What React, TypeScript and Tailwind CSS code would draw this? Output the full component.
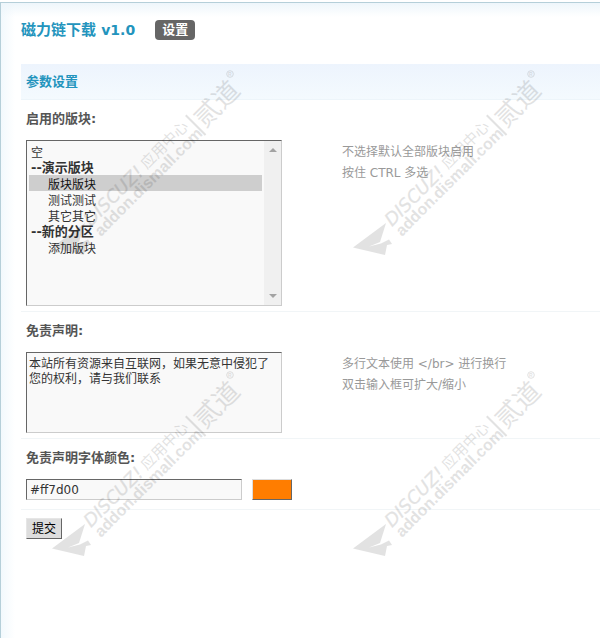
import React from 'react';

interface SettingRowProps {
  label:      string;
  htmlFor:    string;
  hints?:     string[];
  className?: string;
  children:   React.ReactNode;
}

const boards = [
  { label: '--演示版块', options: ['版块版块', '测试测试', '其它其它'] },
  { label: '--新的分区', options: ['添加版块'] },
];

const fieldClass =
  'border border-t-[#666] border-r-[#ccc] border-b-[#ccc] border-l-[#666] bg-[#f9f9f9] text-xs text-[#333] outline-none';

const SettingRow = ({ label, htmlFor, hints = [], className = 'pb-[5px]', children }: SettingRowProps) => (
  <div className={`grid grid-cols-[316px_1fr] border-b border-[#f1f5f7] pt-[9px] pl-[5px] ${className}`}>
    <div>
      <label htmlFor={htmlFor} className="mb-[11px] block text-[13px] leading-5 font-bold text-[#555]">
        {label}
      </label>
      {children}
    </div>
    <div className="pt-[33px] text-xs leading-[21px] text-[#999]">
      {hints.map((hint) => (
        <p key={hint}>{hint}</p>
      ))}
    </div>
  </div>
);

const Watermark = ({ className }: { className: string }) => (
  <svg
    className={`pointer-events-none absolute h-[192px] w-[200px] ${className}`}
    viewBox="0 0 200 192"
    fill="#000"
    opacity="0.11"
    aria-hidden="true"
  >
    <path d="M3 178.500 36 154 30 173 19 177.500 31 174.500 39 170.500 42 175 37 176 35 186Z" />
    <g transform="translate(42 158) rotate(-45)">
      <text x="0" y="0" fontSize="18" fontStyle="italic" fontFamily="'DejaVu Sans', sans-serif" stroke="#000" strokeWidth="0.3">DISCUZ!</text>
      <text x="80" y="-1" fontSize="15" fontFamily="'Noto Sans CJK SC', sans-serif">应用中心</text>
      <path d="M145-12h2v28h-2z" />
      <text x="150" y="11" fontSize="26" fontFamily="'Noto Sans CJK SC', sans-serif">贰道</text>
      <text x="0" y="14" fontSize="16" fontWeight="700" fontFamily="'Liberation Sans', sans-serif">addon.dismall.com</text>
    </g>
    <circle cx="181" cy="5" r="3.3" fill="none" stroke="#000" strokeWidth="1" />
    <text x="179" y="7" fontSize="5" fontWeight="700" fontFamily="'Liberation Sans', sans-serif">R</text>
  </svg>
);

export default function App() {
  return (
    <div className="relative min-h-screen overflow-hidden bg-white pt-[2px] font-['DejaVu_Sans','Noto_Sans_CJK_SC',sans-serif]">
      <div className="min-h-screen border-t border-l border-[#b5cfd9] bg-linear-to-r from-[#f2f9fd] to-white to-[14px]">
        <div className="bg-linear-to-b from-[#eef6fb] to-transparent to-[14px] pt-[17px] pl-5">
          {/* Title */}
          <header className="flex h-5 items-center gap-5">
            <h1 className="text-[15px] leading-5 font-bold text-[#2394bd]">
              磁力链下载 <span className="text-sm">v1.0</span>
            </h1>
            <a href="#settings" className="rounded bg-[#666] px-[7px] text-[13px] leading-5 font-bold text-white">
              设置
            </a>
          </header>

          <form id="settings" className="mt-6" onSubmit={(e) => e.preventDefault()}>
            <h2 className="h-9 border-b border-[#edf5fa] bg-linear-to-b from-[#edf4fd] to-[#f4fafe] pl-[5px] text-[13px] leading-9 font-bold text-[#2394bd]">
              参数设置
            </h2>

            <SettingRow label="启用的版块:" htmlFor="boards" hints={['不选择默认全部版块启用', '按住 CTRL 多选']}>
              <div className={`flex h-[166px] w-64 ${fieldClass}`}>
                <select
                  id="boards"
                  multiple
                  defaultValue={['版块版块']}
                  className="min-w-0 flex-1 overflow-hidden p-[2px] text-xs leading-4 outline-none"
                >
                  <option className="h-4 min-h-0 p-0 pl-[2px]">空</option>
                  {boards.map((group) => (
                    <optgroup key={group.label} label={group.label} className="-mt-[2px] text-[13px]">
                      {group.options.map((name) => (
                        <option key={name} value={name} className="h-4 min-h-0 p-0 pl-[19px] text-xs leading-4 first:-mt-[2px]">
                          {name}
                        </option>
                      ))}
                    </optgroup>
                  ))}
                </select>
                {/* Scroll arrows */}
                <div className="flex w-[17px] flex-col items-center justify-between bg-[#f0f0f0] py-[7px]">
                  <svg width="8" height="4" viewBox="0 0 8 4" fill="#a3a3a3" aria-hidden="true">
                    <path d="M0 4 4 0l4 4z" />
                  </svg>
                  <svg width="8" height="4" viewBox="0 0 8 4" fill="#a3a3a3" aria-hidden="true">
                    <path d="M0 0h8L4 4z" />
                  </svg>
                </div>
              </div>
            </SettingRow>

            <SettingRow
              label="免责声明:"
              htmlFor="disclaimer"
              hints={['多行文本使用 </br> 进行换行', '双击输入框可扩大/缩小']}
            >
              <textarea
                id="disclaimer"
                defaultValue="本站所有资源来自互联网，如果无意中侵犯了您的权利，请与我们联系"
                className={`block h-[81px] w-64 resize-none pt-1 pr-3 pl-[2px] leading-[15px] ${fieldClass}`}
              />
            </SettingRow>

            <SettingRow label="免责声明字体颜色:" htmlFor="color" className="pb-[9px]">
              <div className="flex gap-[10px]">
                <input
                  id="color"
                  type="text"
                  defaultValue="#ff7d00"
                  className={`h-[21px] w-[216px] px-[3px] ${fieldClass}`}
                />
                <button
                  type="button"
                  aria-label="选择颜色"
                  className="h-[21px] w-10 border border-t-[#ddd] border-r-[#666] border-b-[#666] border-l-[#ddd] bg-[#ff7d00]"
                />
              </div>
            </SettingRow>

            <div className="pt-2 pl-[5px]">
              <button
                type="submit"
                className="block h-[21px] border border-t-[#e6e6e6] border-r-[#666] border-b-[#666] border-l-[#e6e6e6] bg-[#ddd] px-[5px] text-xs text-black"
              >
                提交
              </button>
            </div>
          </form>
        </div>
      </div>

      <Watermark className="top-[69px] left-[49px]" />
      <Watermark className="top-[69px] left-[350px]" />
      <Watermark className="top-[370px] left-[49px]" />
      <Watermark className="top-[370px] left-[350px]" />
    </div>
  );
}
